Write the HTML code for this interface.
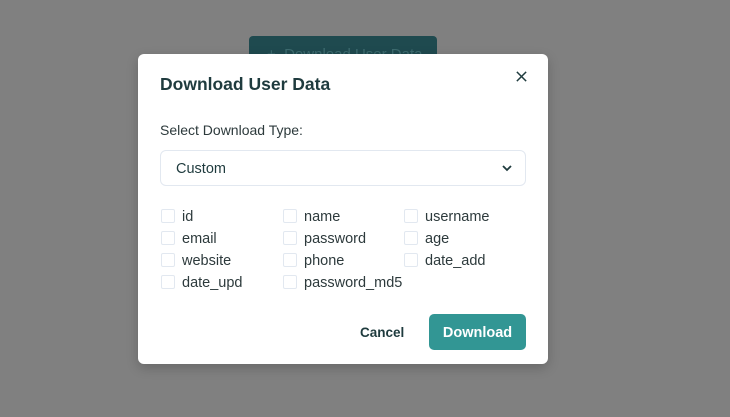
<!DOCTYPE html>
<html><head><style>
*{box-sizing:border-box;margin:0;padding:0}
body{width:730px;height:417px;background:#808080;font-family:"Liberation Sans",sans-serif;position:relative;overflow:hidden;color:#1f3b3e}
.bg{position:absolute;left:249px;top:36px;width:188px;height:40px;background:#1f4a4f;border-radius:4px;color:#3d6b6f;font-size:15px;padding:10px 0 0 18px}
.m{position:absolute;left:138px;top:54px;width:410px;height:310px;background:#fff;border-radius:6px;box-shadow:0 4px 12px rgba(0,0,0,.2)}
.t{position:absolute;left:22px;top:20px;font-size:17.5px;font-weight:bold;color:#1f3b3e}
.x{position:absolute;left:377px;top:16px}
.l{position:absolute;left:22px;top:68px;font-size:14px;color:#2d3a3c}
.s{position:absolute;left:22px;top:96px;width:366px;height:36px;border:1px solid #e2e8f0;border-radius:6px;font-size:14.5px;padding:10px 0 0 15px}
.s svg{position:absolute;right:12px;top:13px}
.c{position:absolute;font-size:14.5px;color:#2d3a3c}
.c i{position:absolute;left:-21px;top:0px;width:14px;height:14px;border:1px solid #e2e8f0;border-radius:2px}
.cn{position:absolute;left:222px;top:271px;font-size:13.5px;font-weight:bold;color:#1f3b3e}
.d{position:absolute;left:291px;top:260px;width:97px;height:36px;background:#329694;border-radius:5px;color:#fff;font-size:14.5px;font-weight:bold;text-align:center;line-height:38px}
</style></head><body>
<div class="bg">+ &nbsp;Download User Data</div>
<div class="m">
<div class="t">Download User Data</div>
<svg class="x" width="13" height="13" viewBox="0 0 14 14"><path d="M2 2L12 12M12 2L2 12" stroke="#1f3b3e" stroke-width="1.6"/></svg>
<div class="l">Select Download Type:</div>
<div class="s">Custom<svg width="12" height="8" viewBox="0 0 12 8"><path d="M2 2L6 6L10 2" stroke="#1f3b3e" stroke-width="1.8" fill="none"/></svg></div>
<div class="c" style="left:44px;top:155px"><i></i>id</div>
<div class="c" style="left:166px;top:155px"><i></i>name</div>
<div class="c" style="left:287px;top:155px"><i></i>username</div>
<div class="c" style="left:44px;top:177px"><i></i>email</div>
<div class="c" style="left:166px;top:177px"><i></i>password</div>
<div class="c" style="left:287px;top:177px"><i></i>age</div>
<div class="c" style="left:44px;top:199px"><i></i>website</div>
<div class="c" style="left:166px;top:199px"><i></i>phone</div>
<div class="c" style="left:287px;top:199px"><i></i>date_add</div>
<div class="c" style="left:44px;top:221px"><i></i>date_upd</div>
<div class="c" style="left:166px;top:221px"><i></i>password_md5</div>
<div class="cn">Cancel</div>
<div class="d">Download</div>
</div>
</body></html>
